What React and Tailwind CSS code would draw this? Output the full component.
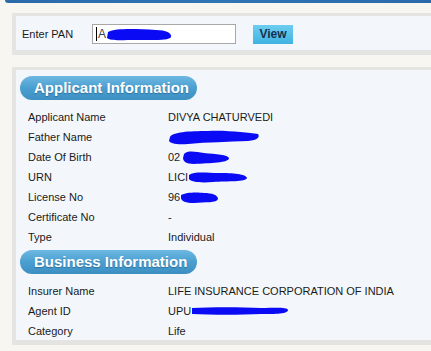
import React from 'react'

function Blob({ w, h, d }) {
  return (
    <svg width={w} height={h} viewBox={`0 0 ${w} ${h}`} className="inline-block align-middle">
      <path d={d} fill="#0a0af5" />
    </svg>
  )
}

function Row({ label, children }) {
  return (
    <div className="flex h-[20px] items-center">
      <div className="w-[140px] shrink-0">{label}</div>
      <div className="flex items-center">{children}</div>
    </div>
  )
}

function Pill({ children }) {
  return (
    <div className="flex h-[24px] w-[177px] items-center rounded-full bg-gradient-to-b from-[#6db8e2] via-[#4a9fd0] to-[#3d8fc2] pl-[14px] text-[15px] font-bold text-white [text-shadow:0_1px_1px_rgba(0,40,80,0.35)]">
      {children}
    </div>
  )
}

export default function App() {
  return (
    <div className="relative h-[351px] w-[431px] overflow-hidden bg-[#f7f6f0] font-['Liberation_Sans',Arial,sans-serif] text-[11px] text-[#1a1a1a]">
      <div className="ml-[5px] h-[3px] rounded-bl-[6px] bg-gradient-to-r from-[#2b6aa9] via-[#2f74b3] to-[#2b6aa9]" />
      <div className="flex flex-col gap-[12px] pl-[12px] pt-[10px]">
        <div className="h-[42px] border-[3px] border-b-[5px] border-l-[4px] border-r-0 border-[#e4e4e2] bg-[#f3f7fb]">
          <div className="flex items-center pl-[6px] pt-[8px]">
            <span className="w-[70px]">Enter PAN</span>
            <div className="flex h-[20px] w-[144px] items-center border border-[#a8a8a8] bg-white pl-[3px] text-[12px] text-[#444]">
              <span className="mr-[1px] h-[14px] w-px bg-black" />
              <span>A</span>
              <Blob w={66} h={15} d="M2 5 C10 1 30 2 50 3 C60 3 66 6 65 10 C63 14 45 13 30 13 C15 13 4 14 1 11 Z" />
            </div>
            <button className="ml-[17px] flex h-[19px] w-[40px] items-center justify-center bg-gradient-to-b from-[#6ccdf0] to-[#3fb3e2] text-[12px] font-bold text-[#15304f]">
              View
            </button>
          </div>
        </div>

        <div className="h-[278px] border-[3px] border-b-[5px] border-l-[4px] border-r-0 border-[#e4e4e2] bg-[#f3f7fb] pl-[4px] pt-[6px]">
          <Pill>Applicant Information</Pill>
          <div className="mt-[7px] pl-[8px]">
            <Row label="Applicant Name">DIVYA CHATURVEDI</Row>
            <Row label="Father Name">
              <Blob w={92} h={17} d="M2 8 C5 3 20 2 40 2 C60 1 80 4 90 5 C92 8 90 11 80 12 C60 13 40 13 20 15 C8 16 2 14 1 12 Z" />
            </Row>
            <Row label="Date Of Birth">
              <span>02</span>
              <Blob w={50} h={16} d="M4 5 C8 1 16 3 24 4 C36 5 48 6 49 9 C49 14 30 14 14 15 C6 15 3 12 3 9 Z" />
            </Row>
            <Row label="URN">
              <span>LICI</span>
              <Blob w={60} h={14} d="M1 5 C6 1 20 3 30 3 C45 3 58 4 59 8 C58 12 40 11 25 12 C12 13 3 12 1 9 Z" />
            </Row>
            <Row label="License No">
              <span>96</span>
              <Blob w={39} h={13} d="M1 4 C6 1 18 1 24 2 C32 2 38 4 38 8 C37 12 25 11 14 12 C6 12 1 10 1 7 Z" />
            </Row>
            <Row label="Certificate No">-</Row>
            <Row label="Type">Individual</Row>
          </div>
          <div className="mt-[3px]">
            <Pill>Business Information</Pill>
          </div>
          <div className="mt-[7px] pl-[8px]">
            <Row label="Insurer Name">LIFE INSURANCE CORPORATION OF INDIA</Row>
            <Row label="Agent ID">
              <span>UPU</span>
              <Blob w={98} h={10} d="M1 2 C20 1 50 1 70 2 C85 2 96 1 97 4 C97 8 85 8 70 8 C50 9 20 9 1 8 Z" />
            </Row>
            <Row label="Category">Life</Row>
          </div>
        </div>
      </div>
    </div>
  )
}
